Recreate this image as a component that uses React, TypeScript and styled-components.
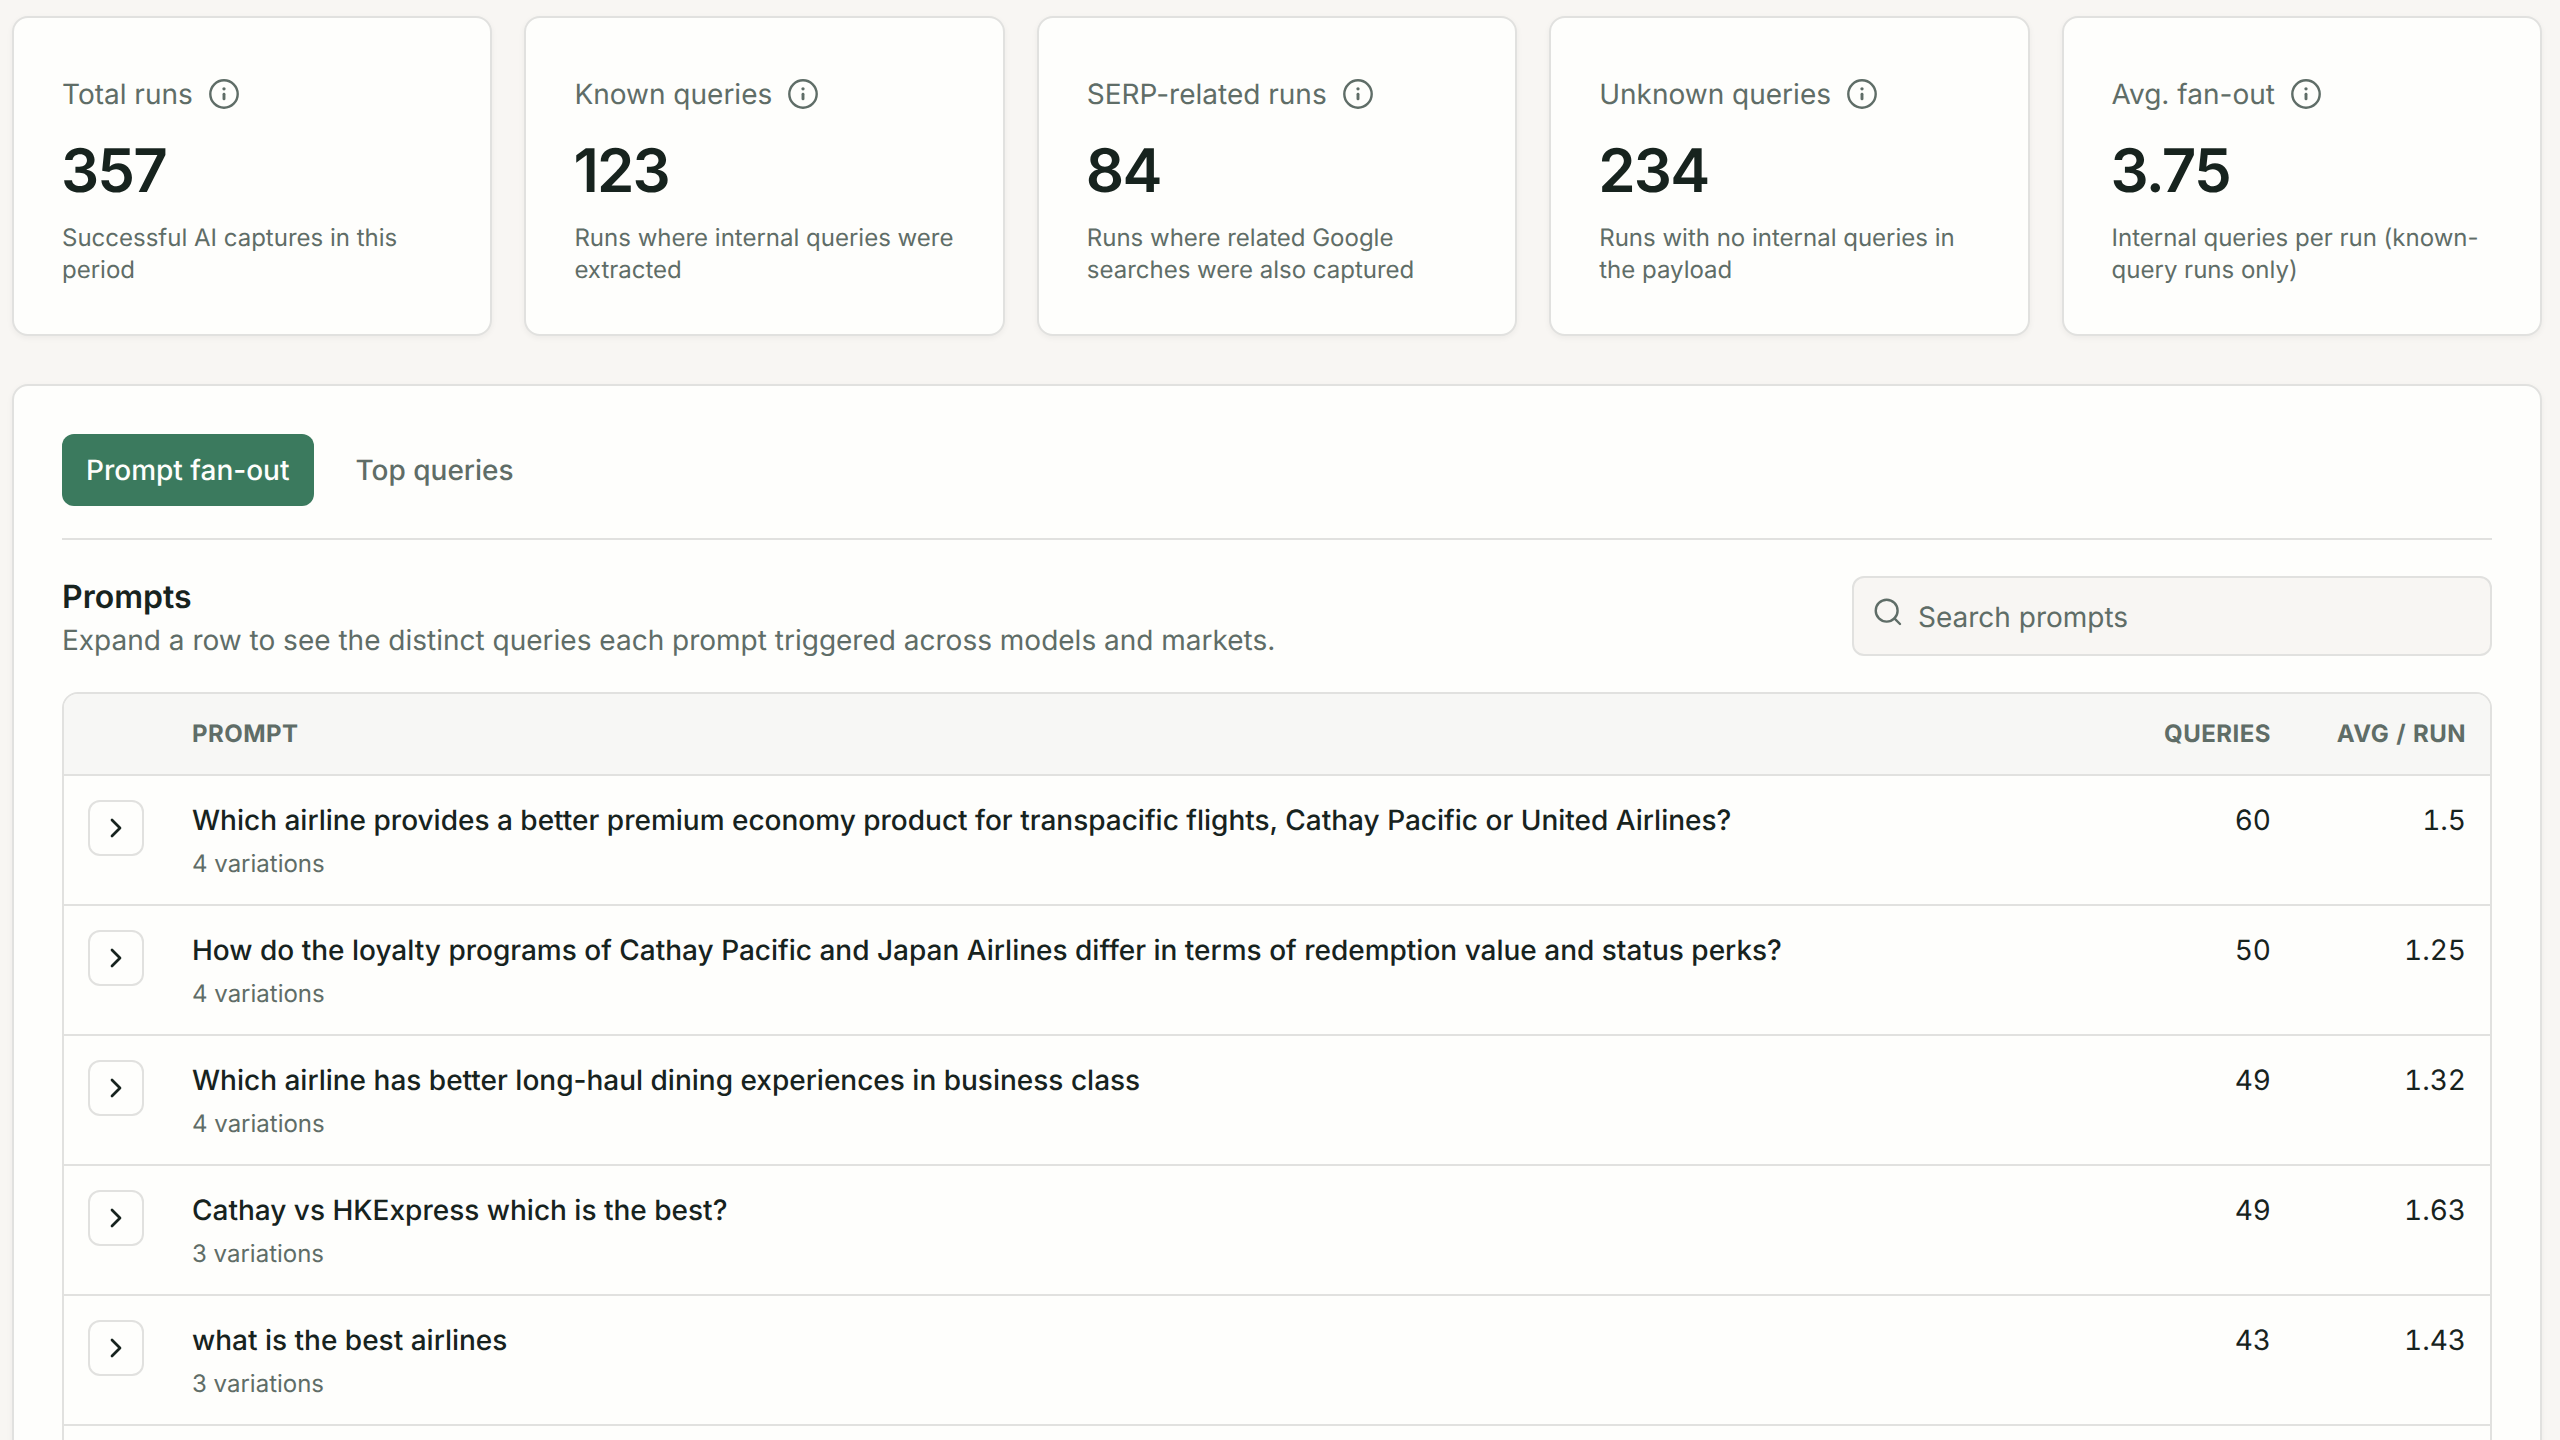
import React from "react";
import styled, { createGlobalStyle } from "styled-components";

const color = {
  page: "#f8f6f3",
  surface: "#fefefc",
  border: "#e1e1df",
  ink: "#17231e",
  muted: "#5f6d67",
  accent: "#3b7a5e",
  head: "#f7f7f5",
};

const GlobalStyle = createGlobalStyle`
  * { box-sizing: border-box; }
  html, body { margin: 0; height: 1440px; overflow: hidden; }
  body {
    background: ${color.page};
    color: ${color.ink};
    font-family: Inter, "Liberation Sans", sans-serif;
    font-size: 28px;
    -webkit-font-smoothing: antialiased;
    text-rendering: geometricPrecision;
  }
`;

const Page = styled.main`
  display: flex;
  flex-direction: column;
  gap: 48px;
  height: 1440px;
  padding: 16px 18px 0 12px;
  overflow: hidden;
`;

const Stats = styled.section`
  display: grid;
  grid-template-columns: repeat(5, minmax(0, 1fr));
  gap: 32px;
`;

const Surface = styled.article`
  background: ${color.surface};
  border: 2px solid ${color.border};
  border-radius: 16px;
  box-shadow: 0 2px 6px rgba(0, 0, 0, 0.05);
  padding: 48px;
`;

const StatHead = styled.header`
  display: flex;
  align-items: center;
  gap: 3px;
  height: 56px;
  color: ${color.muted};
  white-space: nowrap;
`;

const InfoButton = styled.button`
  display: grid;
  place-items: center;
  width: 56px;
  height: 56px;
  padding: 0;
  border: 0;
  background: none;
  color: inherit;
`;

const StatValue = styled.div`
  margin: 13px 0 0 -1px;
  font-size: 60px;
  font-weight: 600;
  line-height: 72px;
  letter-spacing: -0.03em;
`;

const StatNote = styled.p`
  margin: 15px 0 0;
  color: ${color.muted};
  font-size: 24px;
  line-height: 32px;
`;

const Panel = styled(Surface)`
  flex: none;
`;

const Tabs = styled.nav`
  display: flex;
  gap: 17px;
  padding-bottom: 32px;
  border-bottom: 2px solid ${color.border};
`;

const Tab = styled.button<{ $active?: boolean }>`
  height: 72px;
  padding: 0 25px 0 24px;
  border: 0;
  border-radius: 12px;
  background: ${(p) => (p.$active ? color.accent : "transparent")};
  color: ${(p) => (p.$active ? color.surface : color.muted)};
  font: 500 28px/40px Inter, "Liberation Sans", sans-serif;
  text-rendering: inherit;
`;

const Toolbar = styled.div`
  display: flex;
  align-items: flex-start;
  justify-content: space-between;
  padding: 36px 0 32px;
`;

const Title = styled.h2`
  margin: 0 0 2px;
  font-size: 32px;
  font-weight: 600;
  line-height: 42px;
`;

const Subtitle = styled.p`
  margin: 0;
  color: ${color.muted};
  line-height: 40px;
`;

const Search = styled.label`
  display: flex;
  align-items: center;
  gap: 14px;
  width: 640px;
  height: 80px;
  padding: 0 18px;
  border: 2px solid ${color.border};
  border-radius: 12px;
  background: ${color.page};
  color: ${color.muted};

  svg { margin-bottom: 8px; }
`;

const SearchInput = styled.input`
  flex: 1;
  padding: 2px 0 0;
  border: 0;
  outline: 0;
  background: none;
  font: 400 28px/40px Inter, "Liberation Sans", sans-serif;
  text-rendering: inherit;

  &::placeholder { color: ${color.muted}; opacity: 1; }
`;

const Table = styled.div`
  border: 2px solid ${color.border};
  border-radius: 16px;
  overflow: hidden;
`;

const Row = styled.div`
  display: grid;
  grid-template-columns: 104px minmax(0, 1fr) 180px 195px;
  height: 130px;
  padding-top: 24px;
  border-bottom: 2px solid ${color.border};
`;

const HeadRow = styled(Row)`
  height: 82px;
  padding-top: 0;
  align-items: center;
  background: ${color.head};
  color: ${color.muted};
  font-size: 24px;
  font-weight: 700;
  letter-spacing: 0.02em;
`;

const Cell = styled.div<{ $numeric?: boolean }>`
  padding: 0 24px;
  line-height: 40px;
  text-align: ${(p) => (p.$numeric ? "right" : "left")};
  font-variant-numeric: ${(p) => (p.$numeric ? "tabular-nums" : "normal")};
`;

const Prompt = styled.div`
  font-weight: 500;
`;

const Variations = styled.div`
  margin-top: 8px;
  color: ${color.muted};
  font-size: 24px;
  line-height: 32px;
`;

const Expand = styled.button`
  display: grid;
  place-items: center;
  width: 56px;
  height: 56px;
  padding: 0;
  border: 2px solid ${color.border};
  border-radius: 12px;
  background: ${color.surface};
  color: ${color.ink};
`;

const Stroked = styled.svg`
  flex: none;
  fill: none;
  stroke: currentColor;
  stroke-linecap: round;
  stroke-linejoin: round;
`;

const InfoIcon = () => (
  <Stroked width="32" height="32" viewBox="0 0 32 32" strokeWidth="2.4">
    <circle cx="16" cy="16" r="13.7" />
    <path d="M16 16.2V20.9" strokeWidth="2.9" />
    <path d="M16 10.8V10.81" strokeWidth="3.3" />
  </Stroked>
);

const SearchIcon = () => (
  <Stroked width="32" height="32" viewBox="0 0 24 24" strokeWidth="1.8">
    <circle cx="11" cy="11" r="8.2" />
    <path d="M21 21L16.8 16.8" />
  </Stroked>
);

const ChevronIcon = () => (
  <Stroked width="32" height="32" viewBox="0 0 24 24" strokeWidth="2.05">
    <path d="M9 6L15 12L9 18" />
  </Stroked>
);

const stats = [
  { label: "Total runs", value: "357", note: "Successful AI captures in this period" },
  { label: "Known queries", value: "123", note: "Runs where internal queries were extracted" },
  { label: "SERP-related runs", value: "84", note: "Runs where related Google searches were also captured" },
  { label: "Unknown queries", value: "234", note: "Runs with no internal queries in the payload" },
  { label: "Avg. fan-out", value: "3.75", note: "Internal queries per run (known-query runs only)" },
];

const prompts = [
  { text: "Which airline provides a better premium economy product for transpacific flights, Cathay Pacific or United Airlines?", variations: 4, queries: "60", avg: "1.5" },
  { text: "How do the loyalty programs of Cathay Pacific and Japan Airlines differ in terms of redemption value and status perks?", variations: 4, queries: "50", avg: "1.25" },
  { text: "Which airline has better long-haul dining experiences in business class", variations: 4, queries: "49", avg: "1.32" },
  { text: "Cathay vs HKExpress which is the best?", variations: 3, queries: "49", avg: "1.63" },
  { text: "what is the best airlines", variations: 3, queries: "43", avg: "1.43" },
];

export default function App() {
  return (
    <>
      <GlobalStyle />
      <Page>
        <Stats>
          {stats.map((s) => (
            <Surface key={s.label}>
              <StatHead>
                {s.label}
                <InfoButton><InfoIcon /></InfoButton>
              </StatHead>
              <StatValue>{s.value}</StatValue>
              <StatNote>{s.note}</StatNote>
            </Surface>
          ))}
        </Stats>
        <Panel as="section">
          <Tabs>
            <Tab $active>Prompt fan-out</Tab>
            <Tab>Top queries</Tab>
          </Tabs>
          <Toolbar>
            <div>
              <Title>Prompts</Title>
              <Subtitle>Expand a row to see the distinct queries each prompt triggered across models and markets.</Subtitle>
            </div>
            <Search>
              <SearchIcon />
              <SearchInput placeholder="Search prompts" />
            </Search>
          </Toolbar>
          <Table>
            <HeadRow>
              <Cell />
              <Cell>PROMPT</Cell>
              <Cell $numeric>QUERIES</Cell>
              <Cell $numeric>AVG / RUN</Cell>
            </HeadRow>
            {prompts.map((p) => (
              <Row key={p.text}>
                <Cell><Expand><ChevronIcon /></Expand></Cell>
                <Cell>
                  <Prompt>{p.text}</Prompt>
                  <Variations>{p.variations} variations</Variations>
                </Cell>
                <Cell $numeric>{p.queries}</Cell>
                <Cell $numeric>{p.avg}</Cell>
              </Row>
            ))}
            <Row />
          </Table>
        </Panel>
      </Page>
    </>
  );
}
